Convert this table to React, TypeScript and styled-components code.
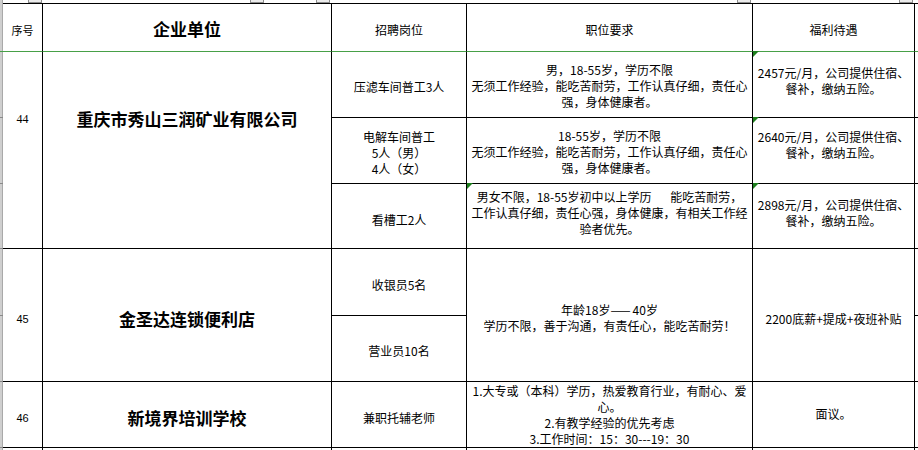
import styled, { createGlobalStyle } from 'styled-components';

const GREEN = '#47a047';
const FLAG = '#1d7f1d';

const GlobalStyle = createGlobalStyle`
  html, body {
    margin: 0;
    padding: 0;
    background: #fff;
  }
  body {
    width: 918px;
    height: 450px;
    overflow: hidden;
    color: #000;
    font-family: "Noto Sans CJK SC", "Noto Sans", sans-serif;
  }
`;

const Page = styled.div`
  display: flex;
  width: 918px;
  height: 450px;
  overflow: hidden;
`;

const Gutter = styled.div`
  flex: none;
  width: 3px;
  display: flex;
  flex-direction: column;
  background: #cfcfcf;
  box-shadow: inset -1px 0 #a9a9a9;
`;

const GutterSeg = styled.div<{ $h?: number; $freeze?: boolean }>`
  box-sizing: border-box;
  flex: ${(p) => (p.$h ? 'none' : '1')};
  height: ${(p) => (p.$h ? `${p.$h}px` : 'auto')};
  border-bottom: ${(p) => (p.$h ? `1px solid ${p.$freeze ? GREEN : '#8a8a8a'}` : 'none')};
`;

const Main = styled.div`
  flex: 1;
  min-width: 0;
  display: flex;
  flex-direction: column;
`;

const TopStrip = styled.div`
  flex: none;
  height: 3px;
  position: relative;
  overflow: hidden;
`;

const FilterTab = styled.div<{ $left: number }>`
  position: absolute;
  top: -11px;
  left: ${(p) => p.$left}px;
  width: 14px;
  height: 14px;
  box-sizing: border-box;
  border: 1px solid #8c8c8c;
  background: #ebebeb;
`;

const Sheet = styled.div`
  flex: 1;
  display: grid;
  grid-template-columns: 40px 289px 135px 286px 162px 1fr;
  grid-template-rows: 49px 66px 66px 65px 67px 66px 66px 1fr;
`;

type CellProps = {
  $rows?: number;
  $head?: boolean;
  $edge?: boolean;
  $open?: boolean;
  $top?: boolean;
  $pt?: number;
  $pb?: number;
  $flag?: boolean;
};

const Cell = styled.div<CellProps>`
  box-sizing: border-box;
  position: relative;
  grid-row: span ${(p) => p.$rows ?? 1};
  display: flex;
  flex-direction: column;
  align-items: center;
  justify-content: ${(p) => (p.$top ? 'flex-start' : 'center')};
  padding-top: ${(p) => p.$pt ?? 0}px;
  padding-bottom: ${(p) => p.$pb ?? 0}px;
  text-align: center;
  white-space: pre;
  font-size: 12px;
  line-height: 16px;
  border-right: ${(p) => (p.$edge ? 'none' : '1px solid #000')};
  border-bottom: ${(p) => (p.$open ? 'none' : `1px solid ${p.$head ? GREEN : '#000'}`)};
  border-top: ${(p) => (p.$head ? '1px solid #000' : 'none')};

  &::before {
    content: '';
    display: ${(p) => (p.$flag ? 'block' : 'none')};
    position: absolute;
    top: -1px;
    left: 0;
    width: 0;
    height: 0;
    border-top: 6px solid ${FLAG};
    border-right: 6px solid transparent;
  }
`;

const Seq = styled.span<{ $serif?: boolean }>`
  font-family: ${(p) => (p.$serif ? '"Liberation Serif", serif' : '"Liberation Sans", sans-serif')};
  font-size: ${(p) => (p.$serif ? 12 : 11)}px;
`;

const SmallHead = styled.span`
  font-size: 11px;
`;

const Company = styled.span`
  font-size: 17px;
  line-height: 20px;
  font-weight: 700;
`;

const Line = styled.div`
  white-space: pre;
`;

const Dash = styled.span`
  letter-spacing: 2px;
`;

const tabs = [25, 247, 313, 734, 896];
const gutter = [52, 66, 66, 65, 67, 66, 66];

export default function App() {
  return (
    <>
      <GlobalStyle />
      <Page>
        <Gutter>
          {gutter.map((h, i) => (
            <GutterSeg key={i} $h={h} $freeze={i === 0} />
          ))}
          <GutterSeg />
        </Gutter>
        <Main>
          <TopStrip>
            {tabs.map((x) => (
              <FilterTab key={x} $left={x} />
            ))}
          </TopStrip>
          <Sheet>
            {/* header */}
            <Cell $head $pt={4}>
              <SmallHead>序号</SmallHead>
            </Cell>
            <Cell $head $pt={2}>
              <Company>企业单位</Company>
            </Cell>
            <Cell $head $pt={4}>招聘岗位</Cell>
            <Cell $head $pt={4}>职位要求</Cell>
            <Cell $head $pt={4}>福利待遇</Cell>
            <Cell $head $edge />

            {/* 44 */}
            <Cell $rows={3} $top $pt={59}>
              <Seq $serif>44</Seq>
            </Cell>
            <Cell $rows={3} $top $pt={57}>
              <Company>重庆市秀山三润矿业有限公司</Company>
            </Cell>
            <Cell $pt={5}>压滤车间普工3人</Cell>
            <Cell $pt={3}>
              <Line>男，18-55岁，学历不限</Line>
              <Line>无须工作经验，能吃苦耐劳，工作认真仔细，责任心</Line>
              <Line>强，身体健康者。</Line>
            </Cell>
            <Cell $pb={8} $flag>
              <Line>2457元/月，公司提供住宿、</Line>
              <Line>餐补，缴纳五险。</Line>
            </Cell>
            <Cell $edge />

            <Cell $pt={4}>
              <Line>电解车间普工</Line>
              <Line>5人（男）</Line>
              <Line>4人（女）</Line>
            </Cell>
            <Cell $pt={3}>
              <Line>18-55岁，学历不限</Line>
              <Line>无须工作经验，能吃苦耐劳，工作认真仔细，责任心</Line>
              <Line>强，身体健康者。</Line>
            </Cell>
            <Cell $pb={12} $flag>
              <Line>2640元/月，公司提供住宿、</Line>
              <Line>餐补，缴纳五险。</Line>
            </Cell>
            <Cell $edge />

            <Cell $pt={7}>看槽工2人</Cell>
            <Cell $pb={6} $flag>
              <Line>男女不限，18-55岁初中以上学历       能吃苦耐劳，</Line>
              <Line>工作认真仔细，责任心强，身体健康，有相关工作经</Line>
              <Line>验者优先。</Line>
            </Cell>
            <Cell $pb={7} $flag>
              <Line>2898元/月，公司提供住宿、</Line>
              <Line>餐补，缴纳五险。</Line>
            </Cell>
            <Cell $edge />

            {/* 45 */}
            <Cell $rows={2} $pt={7}>
              <Seq>45</Seq>
            </Cell>
            <Cell $rows={2} $pt={7}>
              <Company>金圣达连锁便利店</Company>
            </Cell>
            <Cell $pt={5}>收银员5名</Cell>
            <Cell $rows={2} $pt={6}>
              <Line>
                年龄18岁<Dash>——</Dash>40岁
              </Line>
              <Line>学历不限，善于沟通，有责任心，能吃苦耐劳！</Line>
            </Cell>
            <Cell $rows={2} $pt={7}>2200底薪+提成+夜班补贴</Cell>
            <Cell $edge />
            <Cell $pt={4}>营业员10名</Cell>
            <Cell $edge />

            {/* 46 */}
            <Cell $pt={6}>
              <Seq>46</Seq>
            </Cell>
            <Cell $pt={6}>
              <Company>新境界培训学校</Company>
            </Cell>
            <Cell $pt={6}>兼职托辅老师</Cell>
            <Cell $top $pt={1}>
              <Line>1.大专或（本科）学历，热爱教育行业，有耐心、爱</Line>
              <Line>心。</Line>
              <Line>2.有教学经验的优先考虑</Line>
              <Line>3.工作时间：15：30---19：30</Line>
            </Cell>
            <Cell $pb={2}>面议。</Cell>
            <Cell $edge />

            {/* next row, cut off */}
            <Cell $open />
            <Cell $open />
            <Cell $open />
            <Cell $open />
            <Cell $open />
            <Cell $open $edge />
          </Sheet>
        </Main>
      </Page>
    </>
  );
}
